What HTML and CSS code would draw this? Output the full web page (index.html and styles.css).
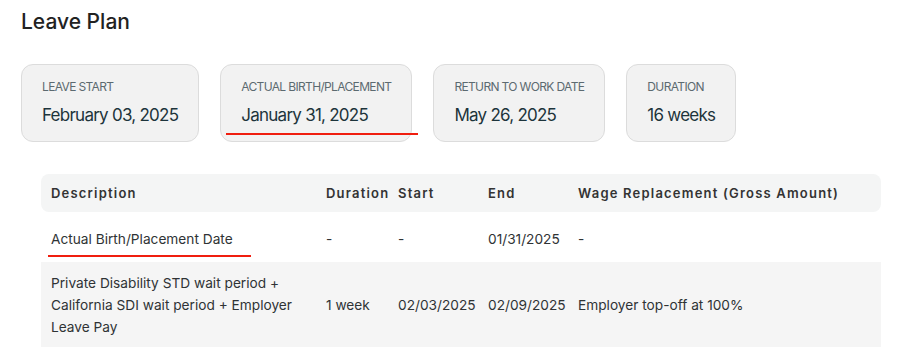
FILE: index.html
```html
<!DOCTYPE html>
<html lang="en">
<head>
    <meta charset="UTF-8">
    <title>Leave Plan</title>
    <link rel="stylesheet" href="styles.css">
</head>
<body>

<h1 class="page-title">Leave Plan</h1>

<div class="summary">
    <div class="card">
        <span class="card-label">Leave start</span>
        <span class="card-value">February 03, 2025</span>
    </div>
    <div class="card marked">
        <span class="card-label">Actual birth/placement</span>
        <span class="card-value">January 31, 2025</span>
        <span class="mark mark-card"></span>
    </div>
    <div class="card">
        <span class="card-label">Return to work date</span>
        <span class="card-value">May 26, 2025</span>
    </div>
    <div class="card">
        <span class="card-label">Duration</span>
        <span class="card-value">16 weeks</span>
    </div>
</div>

<table class="plan">
    <colgroup>
        <col class="c-desc">
        <col class="c-dur">
        <col class="c-start">
        <col class="c-end">
        <col>
    </colgroup>
    <thead>
        <tr>
            <th>Description</th>
            <th>Duration</th>
            <th>Start</th>
            <th>End</th>
            <th>Wage Replacement (Gross Amount)</th>
        </tr>
    </thead>
    <tbody>
        <tr class="first">
            <td class="marked">Actual Birth/Placement Date<span class="mark mark-row"></span></td>
            <td>-</td>
            <td>-</td>
            <td>01/31/2025</td>
            <td>-</td>
        </tr>
        <tr class="shaded">
            <td>Private Disability STD wait period + California SDI wait period + Employer Leave Pay</td>
            <td>1 week</td>
            <td>02/03/2025</td>
            <td>02/09/2025</td>
            <td>Employer top-off at 100%</td>
        </tr>
    </tbody>
</table>

</body>
</html>
```

FILE: styles.css
```css
body {
    margin: 0;
    padding: 0 24px 0 21px;
    font-family: Inter, "Noto Sans", sans-serif;
    background-color: #ffffff;
    color: #2b2f31;
}
.page-title {
    margin: 10px 0 0 0;
    font-size: 21px;
    line-height: 24px;
    font-weight: 500;
    color: #222222;
}
.summary {
    display: flex;
    gap: 21px;
    margin-top: 30px;
}
.card {
    display: flex;
    flex-direction: column;
    padding: 14px 20px 15px 20px;
    background-color: #f2f2f2;
    border: 1px solid #dcdcdc;
    border-radius: 12px;
    position: relative;
}
.card-label {
    font-size: 12px;
    line-height: 16px;
    letter-spacing: -0.65px;
    text-transform: uppercase;
    color: #5c6a70;
}
.card-value {
    margin-top: 9px;
    font-size: 17px;
    line-height: 22px;
    letter-spacing: -0.75px;
    color: #1d343b;
}
/* red annotation strokes */
.mark {
    position: absolute;
    height: 2px;
    background-color: #f01e0f;
}
.mark-card {
    left: 5px;
    right: -7px;
    bottom: 6px;
}
.mark-row {
    left: 7px;
    width: 203px;
    bottom: 5px;
}
.marked {
    position: relative;
}
.plan {
    margin: 32px 0 0 20px;
    width: 840px;
    border-collapse: separate;
    border-spacing: 0;
    table-layout: fixed;
    font-size: 13.7px;
    color: #2f3335;
}
.c-desc { width: 275px; }
.c-dur { width: 72px; }
.c-start { width: 90px; }
.c-end { width: 90px; }
.plan th {
    text-align: left;
    font-size: 13px;
    font-weight: 600;
    letter-spacing: 1.2px;
    height: 38px;
    padding: 0 10px;
    background-color: #f4f5f5;
    color: #333333;
    white-space: nowrap;
}
.plan th:first-child {
    border-radius: 8px 0 0 8px;
}
.plan th:last-child {
    border-radius: 0 8px 8px 0;
}
.plan td {
    padding: 0 10px;
    height: 50px;
    line-height: 22px;
    vertical-align: middle;
    white-space: nowrap;
}
.plan .first td {
    padding-top: 4px;
    height: 46px;
}
.plan td:first-child {
    white-space: normal;
}
.plan .shaded td {
    background-color: #f5f5f5;
    height: 85px;
}
```
